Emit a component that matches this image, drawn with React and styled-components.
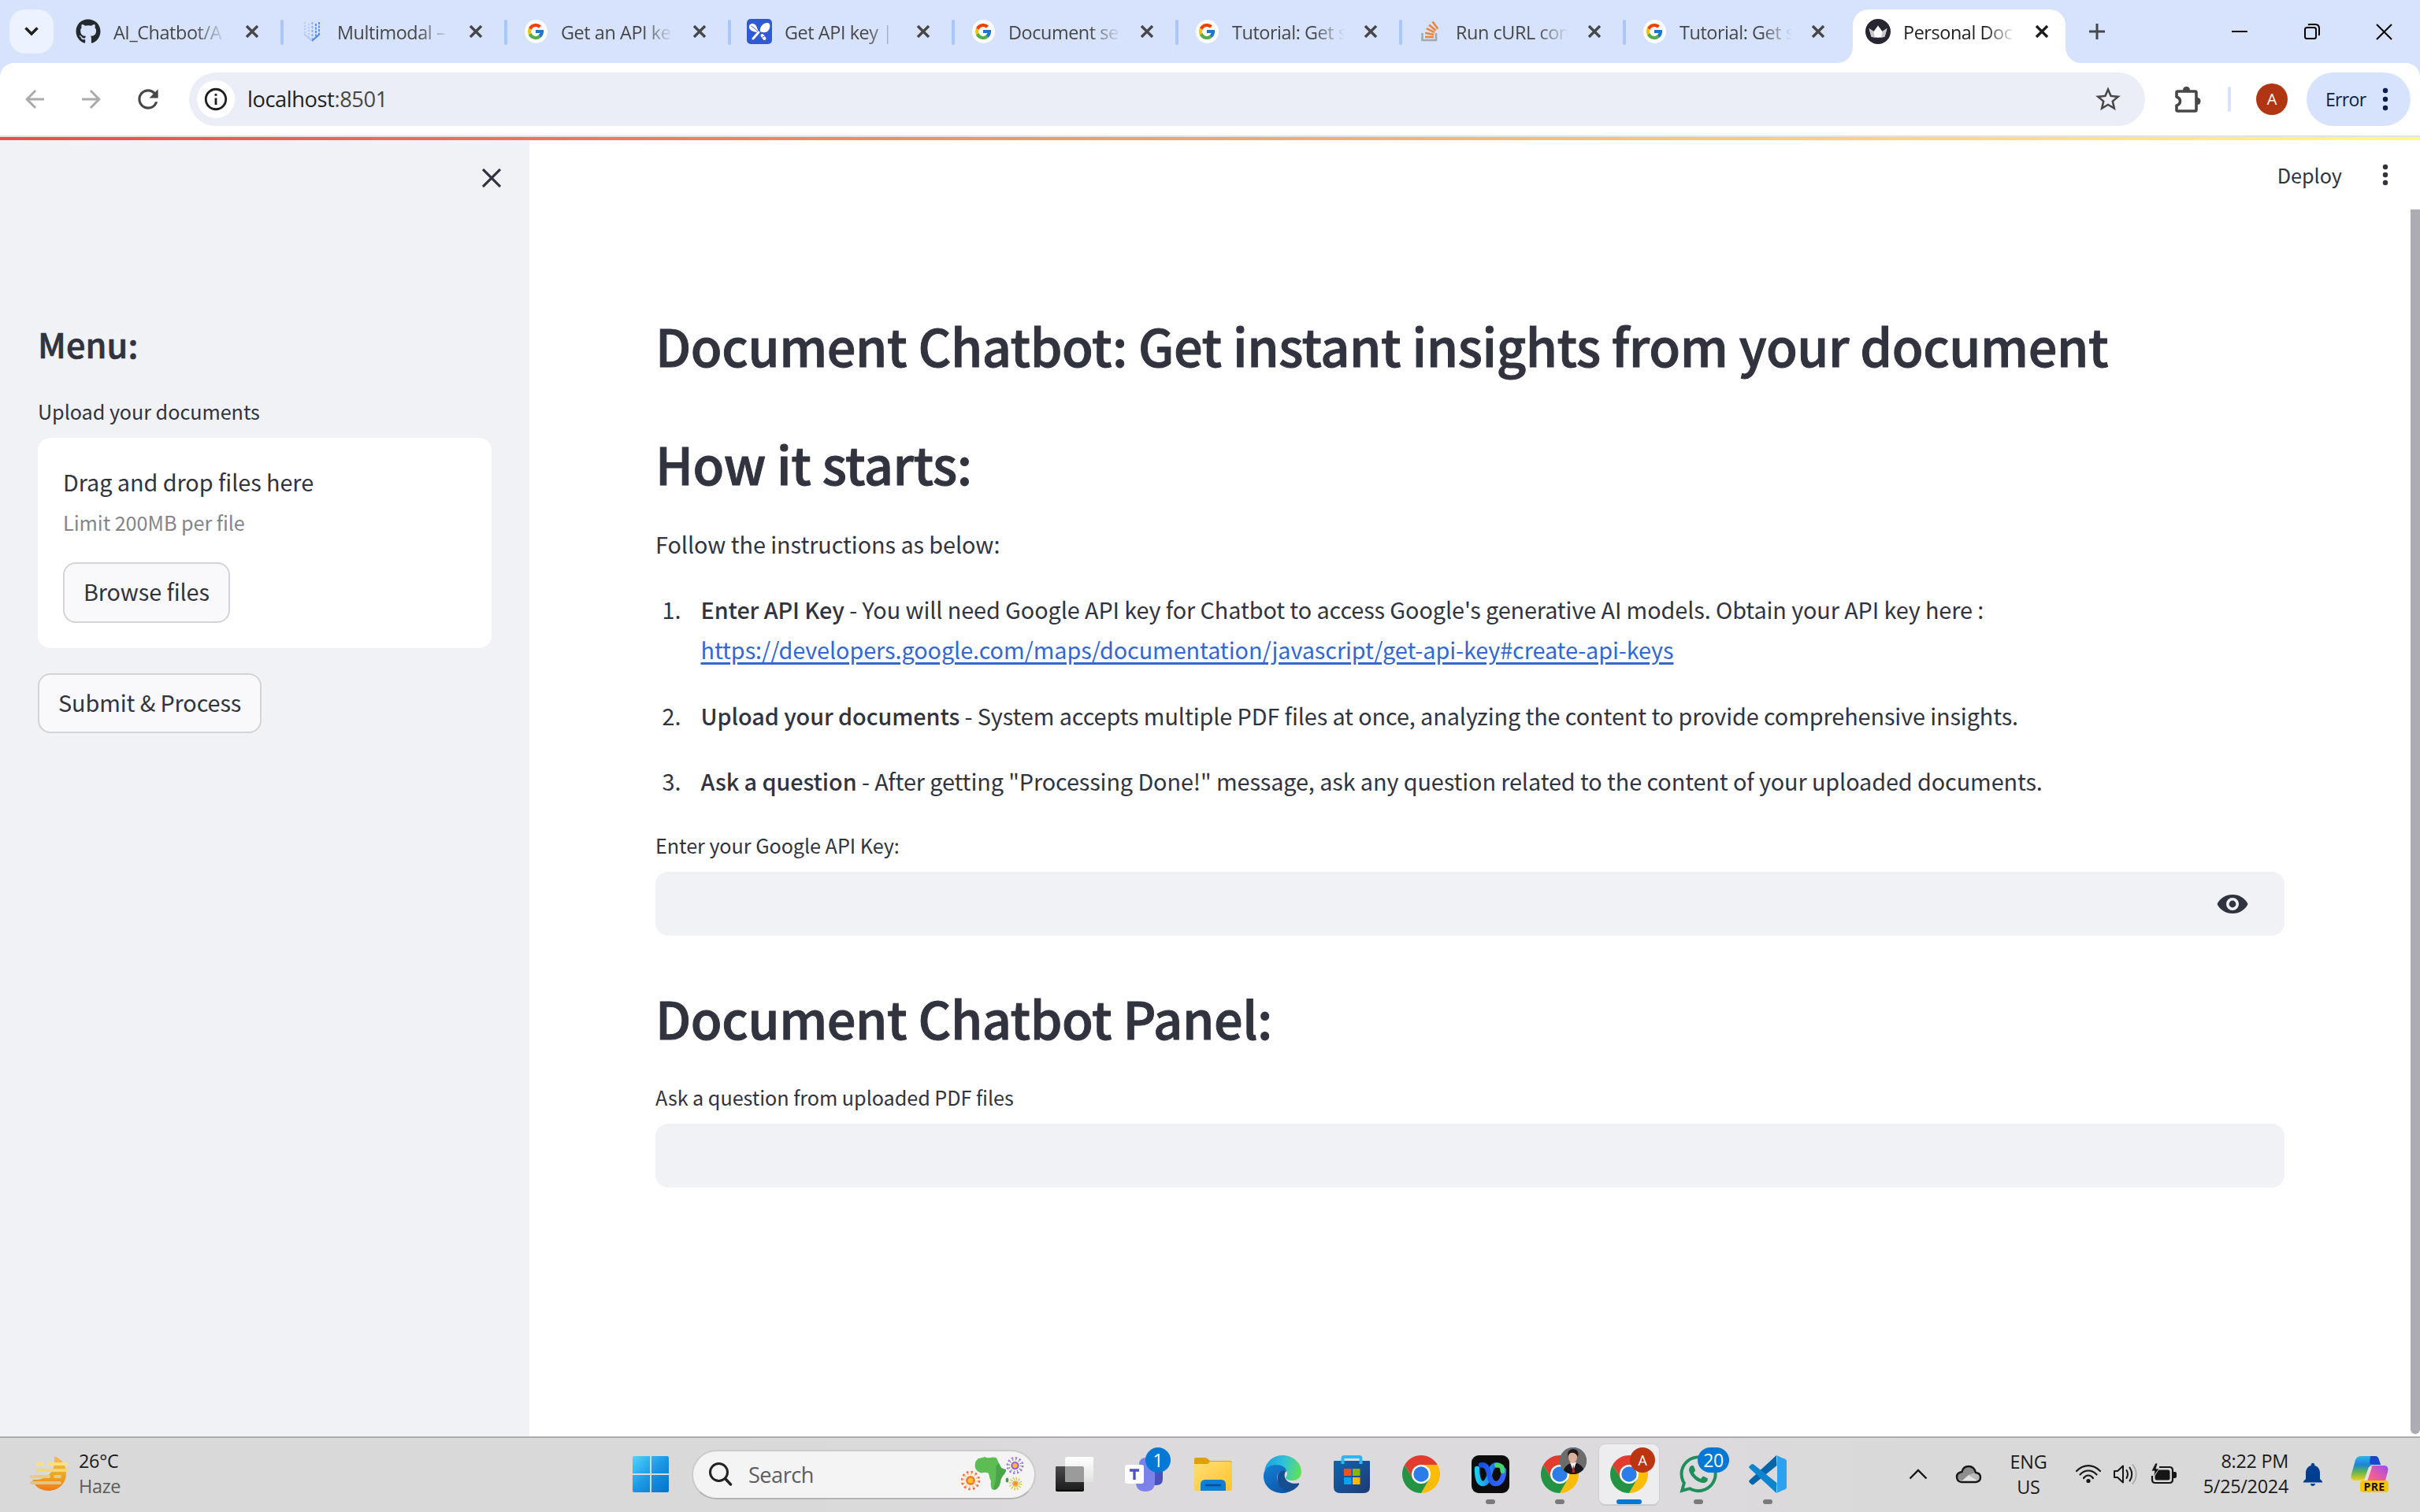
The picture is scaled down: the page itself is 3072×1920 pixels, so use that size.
import React from "react";
import styled, { createGlobalStyle, css } from "styled-components";
import { FaGithub, FaWhatsapp } from "react-icons/fa";
import { FcGoogle } from "react-icons/fc";
import {
  MdArrowBack,
  MdArrowForward,
  MdRefresh,
  MdStarBorder,
  MdInfoOutline,
  MdNotifications,
} from "react-icons/md";

const SOURCE = `"Noto Sans CJK SC", "Noto Sans", sans-serif`;
const SYSTEM = `"Open Sans", "Noto Sans", sans-serif`;
const INK = "#31333f";

const Global = createGlobalStyle`
  *, *::before, *::after { box-sizing: border-box; }
  html, body { margin: 0; padding: 0; }
  body { background: #fff; font-family: ${SOURCE}; color: ${INK}; overflow: hidden; }
  svg { display: block; flex: none; }
  h1, h2, p, ol { margin: 0; padding: 0; }
`;

const Screen = styled.div`
  width: 3072px;
  height: 1920px;
  display: flex;
  flex-direction: column;
  background: #fff;
`;

/* ---------- browser: tab strip ---------- */

const TabStrip = styled.div`
  height: 80px;
  flex: none;
  display: flex;
  padding: 12px 0 0 12px;
  background: #d7e3fd;
  font-family: ${SYSTEM};
`;

const TabSearch = styled.button`
  width: 56px;
  height: 56px;
  margin-right: 8px;
  padding: 0;
  border: 0;
  border-radius: 20px;
  background: #ecf2ff;
  display: flex;
  align-items: center;
  justify-content: center;
`;

const Tab = styled.div`
  position: relative;
  width: ${(p) => (p.$active ? 270 : 284)}px;
  height: 68px;
  flex: none;
  margin-left: ${(p) => (p.$active ? 4 : 0)}px;
  padding: 0 ${(p) => (p.$active ? 22 : 28)}px 12px ${(p) => (p.$active ? 16 : 20)}px;
  display: flex;
  align-items: center;
  color: ${(p) => (p.$active ? "#1f1f1f" : "#474747")};
  border-radius: 20px 20px 0 0;
  ${(p) =>
    p.$active &&
    css`
      background: #fff;
      &::before,
      &::after {
        content: "";
        position: absolute;
        bottom: 0;
        width: 20px;
        height: 20px;
      }
      &::before {
        left: -20px;
        background: radial-gradient(circle at 0 0, transparent 19.5px, #fff 20.5px);
      }
      &::after {
        right: -20px;
        background: radial-gradient(circle at 100% 0, transparent 19.5px, #fff 20.5px);
      }
    `}
  ${(p) =>
    p.$divider &&
    css`
      &::after {
        content: "";
        position: absolute;
        right: 0;
        top: 13px;
        width: 4px;
        height: 32px;
        border-radius: 2px;
        background: #a8c7fa;
      }
    `}
`;

const Favicon = styled.span`
  width: 32px;
  height: 32px;
  flex: none;
  display: flex;
  align-items: center;
  justify-content: center;
`;

const GoogleDisc = styled.span`
  width: 29px;
  height: 30px;
  border-radius: 50%;
  background: #fff;
  display: flex;
  align-items: center;
  justify-content: center;
`;

const TabTitle = styled.span`
  width: 152px;
  margin-left: 16px;
  padding-top: 2px;
  white-space: nowrap;
  font-size: 23.4px;
  line-height: 34px;
  letter-spacing: -0.018em;
  mask-image: linear-gradient(90deg, #000 68%, transparent 94%);
`;

const TabClose = styled.span`
  margin-left: 16px;
`;

const NewTab = styled.span`
  width: 80px;
  height: 56px;
  display: flex;
  align-items: center;
  justify-content: center;
`;

const WindowButtons = styled.div`
  margin-left: auto;
  display: flex;
  height: 56px;
`;

const WindowButton = styled.span`
  width: 91.6px;
  display: flex;
  align-items: center;
  justify-content: center;
`;

/* ---------- browser: toolbar ---------- */

const ToolbarBack = styled.div`
  flex: none;
  background: #d7e3fd;
`;

const Toolbar = styled.div`
  height: 94px;
  display: flex;
  align-items: center;
  padding: 0 12px 0 8px;
  background: #fff;
  border-radius: 18px 18px 0 0;
  border-bottom: 2px solid #e0e3df;
  font-family: ${SYSTEM};
`;

const NavButton = styled.span`
  width: 72px;
  display: flex;
  justify-content: center;
  color: ${(p) => (p.$off ? "#ababab" : "#474747")};
`;

const AddressBar = styled.div`
  flex: 1;
  height: 68px;
  margin-left: 16px;
  padding: 0 28px 0 10px;
  border-radius: 34px;
  background: #ebeef7;
  display: flex;
  align-items: center;
  color: #474747;
`;

const SiteInfo = styled.span`
  width: 48px;
  height: 48px;
  border-radius: 50%;
  background: #fff;
  color: #1f1f1f;
  display: flex;
  align-items: center;
  justify-content: center;
`;

const Url = styled.span`
  flex: 1;
  margin-left: 16px;
  font-size: 27.3px;
  line-height: 40px;
  letter-spacing: -0.016em;
`;

const Host = styled.span`
  color: #1f1f1f;
`;

const ToolSlot = styled.span`
  width: 105px;
  padding-left: 2px;
  display: flex;
  justify-content: center;
`;

const ToolDivider = styled.span`
  width: 4px;
  height: 32px;
  border-radius: 2px;
  background: #d7e3fd;
`;

const Avatar = styled.span`
  width: 40px;
  height: 40px;
  margin: 0 24px 0 32px;
  border-radius: 50%;
  background: #b03512;
  color: #fff;
  font-size: 20px;
  line-height: 40px;
  text-align: center;
`;

const ErrorChip = styled.span`
  width: 132px;
  height: 68px;
  padding: 0 28px 0 24px;
  border-radius: 34px;
  background: #d7e3fd;
  color: #0b1f4c;
  font-size: 23px;
  letter-spacing: -0.03em;
  display: flex;
  align-items: center;
  justify-content: space-between;
`;

const Decoration = styled.div`
  height: 4px;
  flex: none;
  background: linear-gradient(90deg, #ec4b4f, #fffd80);
`;

/* ---------- page ---------- */

const Page = styled.div`
  flex: 1;
  min-height: 0;
  display: flex;
`;

const Sidebar = styled.aside`
  width: 672px;
  flex: none;
  padding: 0 48px;
  background: #f0f2f6;
`;

const SidebarTop = styled.div`
  height: 229px;
  display: flex;
  justify-content: flex-end;
  padding: 36px 0 0;
  margin-right: -12px;
`;

const MenuTitle = styled.h2`
  font-size: 43.2px;
  font-weight: 500;
  line-height: 58px;
  letter-spacing: 0.1px;
  -webkit-text-stroke: 0.7px ${INK};
`;

const FieldLabel = styled.p`
  margin-top: ${(p) => p.$gap}px;
  margin-bottom: 11px;
  font-size: 25.2px;
  line-height: 45px;
  letter-spacing: -0.05px;
`;

const DropZone = styled.div`
  height: 267px;
  padding: 30px 32px 32px;
  border-radius: 16px;
  background: #fff;
`;

const DropTitle = styled.p`
  font-size: 28.8px;
  line-height: 51px;
  letter-spacing: -0.05px;
`;

const DropHint = styled.p`
  margin: 4px 0 28px;
  font-size: 25.2px;
  line-height: 45px;
  letter-spacing: -0.05px;
  color: #84858c;
`;

const Button = styled.button`
  height: 76.5px;
  padding: 0 24px 3px;
  border: 2px solid #d3d4d8;
  border-radius: 16px;
  background: #f9f9fb;
  color: ${INK};
  font-family: inherit;
  font-size: 28.8px;
  line-height: 51px;
  letter-spacing: -0.1px;
  display: block;
`;

const SubmitRow = styled.div`
  margin-top: 31.5px;
`;

const Main = styled.main`
  flex: 1;
  display: flex;
  flex-direction: column;
`;

const AppHeader = styled.header`
  height: 88px;
  flex: none;
  display: flex;
  align-items: center;
  justify-content: flex-end;
  gap: 51px;
  padding: 0 40px 0 0;
`;

const Deploy = styled.span`
  font-size: 25.2px;
  line-height: 45px;
`;

const Scroller = styled.div`
  flex: 1;
  min-height: 0;
  display: flex;
`;

const Content = styled.div`
  flex: 1;
  padding: 129px 160px 0 160px;
`;

const ScrollThumb = styled.div`
  width: 12px;
  height: 1555px;
  border-radius: 0 0 6px 6px;
  background: #adacb2;
`;

const Title = styled.h1`
  margin-top: ${(p) => p.$gap || 0}px;
  font-size: 64.8px;
  font-weight: 500;
  line-height: 86px;
  letter-spacing: -0.42px;
  white-space: nowrap;
  -webkit-text-stroke: 1px ${INK};
`;

const Intro = styled.p`
  margin-top: 34px;
  font-size: 28.8px;
  line-height: 51.2px;
  letter-spacing: -0.06px;
`;

const Steps = styled.ol`
  margin-top: 32px;
  list-style: none;
  display: flex;
  flex-direction: column;
  gap: 32px;
`;

const Step = styled.li`
  display: grid;
  grid-template-columns: 49px 1fr;
  padding-left: 8.5px;
  font-size: 28.8px;
  line-height: 51.2px;
  letter-spacing: -0.09px;
  white-space: nowrap;
`;

const Strong = styled.strong`
  font-weight: 500;
`;

const Link = styled.a`
  display: block;
  width: fit-content;
  color: #3367d1;
  letter-spacing: -0.07px;
  text-decoration: underline;
  text-decoration-thickness: 3px;
  text-underline-offset: 4px;
`;

const TextField = styled.div`
  height: 81px;
  padding-right: 46px;
  border-radius: 16px;
  background: #f0f2f6;
  display: flex;
  align-items: center;
  justify-content: flex-end;
`;

/* ---------- taskbar ---------- */

const Taskbar = styled.footer`
  height: 96px;
  flex: none;
  display: flex;
  align-items: center;
  padding-bottom: 2px;
  border-top: 2px solid #adadad;
  background: linear-gradient(90deg, #d9d9d9 20%, #dcdadc 45%, #dcdadc 70%, #d9d9d9 85%);
  font-family: ${SYSTEM};
  font-size: 23.4px;
  line-height: 32px;
  letter-spacing: -0.012em;
  color: #1a1a1a;
`;

const Weather = styled.div`
  width: 782px;
  flex: none;
  display: flex;
  align-items: center;
  gap: 14px;
  padding: 0 0 2px 38px;
`;

const Lines = styled.div`
  padding-bottom: ${(p) => p.$lift || 0}px;
  text-align: ${(p) => p.$align || "left"};
`;

const Muted = styled.div`
  color: #5c5c5c;
`;

const TaskCell = styled.div`
  position: relative;
  width: 88px;
  height: 92px;
  flex: none;
  display: flex;
  align-items: center;
  justify-content: center;
  &::after {
    content: "";
    display: ${(p) => (p.$running || p.$active ? "block" : "none")};
    position: absolute;
    bottom: 8px;
    left: 50%;
    transform: translateX(-50%);
    width: ${(p) => (p.$active ? 32 : 12)}px;
    height: 6px;
    border-radius: 3px;
    background: ${(p) => (p.$active ? "#0078d4" : "#7c7b7c")};
  }
`;

const ActivePlate = styled.span`
  width: 76px;
  height: 76px;
  border-radius: 8px;
  background: #edecee;
  box-shadow: 0 0 0 1px #d0cfd0, 0 2px 0 #c6c5c6;
  display: flex;
  align-items: center;
  justify-content: center;
`;

const Badge = styled.span`
  position: absolute;
  top: 12px;
  left: ${(p) => p.$left}px;
  width: ${(p) => p.$w || 32}px;
  height: ${(p) => p.$h || 32}px;
  border-radius: 17px;
  background: ${(p) => p.$bg || "#0078d4"};
  color: #fff;
  font-size: ${(p) => p.$size || 23}px;
  line-height: 32px;
  text-align: center;
  overflow: hidden;
`;

const SearchBox = styled.div`
  width: 437px;
  height: 63px;
  margin: 0 5px 0 8px;
  flex: none;
  padding: 0 13px 0 20px;
  border: 2px solid #cbcbcb;
  border-bottom-color: #b3b3b3;
  border-radius: 32px;
  background: #f4f4f4;
  display: flex;
  align-items: center;
  color: #5d5d5d;
  font-size: 27.2px;
`;

const SearchText = styled.span`
  flex: 1;
  margin-left: 20px;
  padding-top: 1px;
  letter-spacing: -0.02em;
`;

const Tray = styled.div`
  margin-left: auto;
  margin-right: 37px;
  display: flex;
  align-items: center;
`;

const TrayCell = styled.div`
  width: ${(p) => p.$w}px;
  margin-left: ${(p) => p.$gap || 0}px;
  height: 92px;
  display: flex;
  align-items: center;
  justify-content: ${(p) => p.$justify || "center"};
`;

const CopilotWrap = styled.span`
  position: relative;
  display: block;
`;

const PreTag = styled.span`
  position: absolute;
  left: 12px;
  bottom: 0;
  width: 36px;
  height: 15px;
  border-radius: 4px;
  background: #fdc400;
  color: #111;
  font-size: 14px;
  font-weight: 700;
  line-height: 15px;
  letter-spacing: 0.3px;
  text-align: center;
`;

/* ---------- drawings ---------- */

const Cross = ({ size = 16, width = 3.4, color = "#474747" }) => (
  <svg width={size} height={size} viewBox={`0 0 ${size} ${size}`}>
    <path d={`M1 1 L${size - 1} ${size - 1} M${size - 1} 1 L1 ${size - 1}`} stroke={color} strokeWidth={width} />
  </svg>
);

const Dots = ({ r = 3.2, step = 10, color = INK }) => (
  <svg width="8" height={step * 2 + 8} viewBox={`0 0 8 ${step * 2 + 8}`} fill={color}>
    <circle cx="4" cy="4" r={r} />
    <circle cx="4" cy={4 + step} r={r} />
    <circle cx="4" cy={4 + step * 2} r={r} />
  </svg>
);

const VertexIcon = () => (
  <svg width="24" height="28" viewBox="0 0 24 28" fill="none" stroke="#4f86ee" strokeWidth="1.800">
    <path d="M3 2V19M8 4V22" strokeDasharray="2 2" stroke="#b5cbf8" />
    <path d="M12.500 2V24" strokeDasharray="3 2" stroke="#86acf4" />
    <path d="M17 4V20M21 2V17" strokeDasharray="3 1.500" />
    <path d="M2 17L11 25" stroke="#b5cbf8" strokeWidth="2" />
    <path d="M22 17L12 26" strokeWidth="2" />
  </svg>
);

const ApiKeyIcon = () => (
  <svg width="32" height="32" viewBox="0 0 32 32">
    <rect width="32" height="32" rx="5" fill="#2f5ad3" />
    <path d="M15 17C8 17 2 14 3 9C4 5 10 5 12 9C13 11 14 14 15 17Z" fill="#fff" />
    <path d="M17 16C16 11 20 5 26 5C31 5 30 13 26 16C23 18 19 17 17 16Z" fill="#fff" />
    <path d="M15 17L8 25" stroke="#fff" strokeWidth="3" strokeLinecap="round" />
    <path d="M19.500 21L22.500 25" stroke="#fff" strokeWidth="4" strokeLinecap="round" />
    <path d="M5.500 9C9 11 12 14 14 16M19.500 23.500L22.500 22" stroke="#2f5ad3" strokeWidth="1" fill="none" />
  </svg>
);

const StackIcon = () => (
  <svg width="26" height="28" viewBox="0 0 26 28" fill="none">
    <path d="M2.500 16V25H20V16" stroke="#a5a8ad" strokeWidth="2.600" />
    <g stroke="#e8853a" strokeWidth="2.600">
      <path d="M6 21H17" />
      <path d="M6.200 15.800L17.200 18" />
      <path d="M7.800 10.200L18 15.200" />
      <path d="M11 5.500L19.600 12.700" />
      <path d="M15.500 1.500L22.200 10.500" />
    </g>
  </svg>
);

const CrownIcon = () => (
  <svg width="32" height="32" viewBox="0 0 32 32">
    <circle cx="16" cy="16" r="16" fill="#262730" />
    <path d="M4.500 12L10.500 16L16 8.500L21.500 16L27.500 12L24.500 22.500Q16 25 7.500 22.500Z" fill="#fff" />
    <path d="M4.500 12L10.500 16L12 23.600Q9 23.300 7.500 22.500ZM27.500 12L21.500 16L20 23.600Q23 23.300 24.500 22.500Z" fill="#c9c9cc" />
  </svg>
);

const PuzzleIcon = () => (
  <svg width="38" height="36" viewBox="0 0 38 36" fill="none">
    <path
      d="M5 9.500Q5 8 6.500 8H28.500Q30 8 30 9.500V31.500Q30 33 28.500 33H6.500Q5 33 5 31.500V26Q9.500 24.500 9.500 20.500Q9.500 16.500 5 15Z"
      stroke="#474747"
      strokeWidth="3.600"
      strokeLinejoin="round"
    />
    <path d="M13 7Q13 2 17.500 2Q22 2 22 7ZM31 16Q35.500 16 35.500 20.500Q35.500 25 31 25Z" fill="#474747" />
  </svg>
);

const EyeIcon = () => (
  <svg width="40" height="24" viewBox="0 0 40 24">
    <path d="M0.500 12C4 4.500 11.500 0 20 0S36 4.500 39.500 12C36 19.500 28.500 24 20 24S4 19.500 0.500 12Z" fill={INK} />
    <circle cx="20" cy="12" r="6.200" fill={INK} stroke="#f0f2f6" strokeWidth="3.600" />
  </svg>
);

const HazeIcon = () => (
  <svg width="48" height="44" viewBox="0 0 48 44">
    <defs>
      <linearGradient id="haze" x1="0" y1="0" x2="0" y2="1">
        <stop offset="0" stopColor="#f4bd55" />
        <stop offset=".5" stopColor="#eeaa22" />
        <stop offset="1" stopColor="#f27a17" />
      </linearGradient>
    </defs>
    <path d="M31 0C41 4 46 12 46 22C46 35 36 44 23.500 44C14 44 6 39 3 30C16 31 30 25 31 8Z" fill="url(#haze)" />
    <g strokeWidth="4" strokeLinecap="round">
      <path d="M10 10H16M24 10H46" stroke="#ffe07a" />
      <path d="M10 18H46" stroke="#f6d678" />
      <path d="M2 26H24M32 26H38" stroke="#e8cb85" />
      <path d="M2 34H38" stroke="#dfc48b" />
    </g>
  </svg>
);

const WindowsIcon = () => (
  <svg width="46" height="46" viewBox="0 0 46 46">
    <defs>
      <linearGradient id="win" x1="0" y1="0" x2="1" y2="1">
        <stop offset="0" stopColor="#4fd5ff" />
        <stop offset=".5" stopColor="#1b97e3" />
        <stop offset="1" stopColor="#0072cf" />
      </linearGradient>
    </defs>
    <path d="M2 0H22V22H0V2Q0 0 2 0ZM24 0H44Q46 0 46 2V22H24ZM0 24H22V46H2Q0 46 0 44ZM24 24H46V44Q46 46 44 46H24Z" fill="url(#win)" />
  </svg>
);

const SearchIcon = () => (
  <svg width="30" height="30" viewBox="0 0 30 30" fill="none" stroke="#222" strokeLinecap="round">
    <circle cx="12.500" cy="12.500" r="11" strokeWidth="3" />
    <path d="M20.500 20.500L27.500 28" strokeWidth="3.400" />
  </svg>
);

const Flower = ({ x, y, r, outer, mid, core, dots }) => (
  <g transform={`translate(${x} ${y})`} fill="none">
    <circle r={r} stroke={outer} strokeWidth={r * 0.24} strokeDasharray={`${r * 0.24} ${r * 0.285}`} />
    <circle r={r * 0.76} stroke={dots} strokeWidth={r * 0.16} strokeDasharray={`${r * 0.15} ${r * 0.25}`} />
    <circle r={r * 0.42} fill={core} stroke={mid} strokeWidth={r * 0.24} />
  </g>
);

const AfricaArt = () => (
  <svg width="80" height="44" viewBox="0 0 80 44">
    <path
      d="M22 2Q28 1 30 0Q34 2 37 1Q42 0 45 1.500L48 8L51 14Q55 16 57 16Q57 20 53 24Q50 28 50 32Q49 37 46 40Q43 43 39 41Q37 36 38 31Q36 27 35 21Q31 19 26 20.500Q20 19 18 14Q17 8 19 5Z"
      fill="#5dbc52"
    />
    <path d="M48 8L51 14Q55 16 57 16Q57 20 53 24Q50 28 50 32Q49 37 46 40Q43 43 41 41Q46 25 44 12Z" fill="#48a548" />
    <ellipse cx="58.500" cy="29.500" rx="1.800" ry="3" fill="#3f9f48" />
    <Flower x={12} y={30} r={11} outer="#fb6b43" mid="#fb7b35" core="#ffc629" dots="#ffc04d" />
    <Flower x={68.500} y={11} r={9.800} outer="#b06adf" mid="#a561d8" core="#ffb93b" dots="#55ad5a" />
    <Flower x={69} y={34} r={7.500} outer="#fbc62f" mid="#f7b733" core="#f08b4b" dots="#6bbf64" />
  </svg>
);

const TaskViewIcon = () => (
  <svg width="48" height="44" viewBox="0 0 48 44">
    <defs>
      <linearGradient id="tv" x1="0" y1="0" x2="0" y2="1">
        <stop offset="0" stopColor="#4a4a4a" />
        <stop offset="1" stopColor="#1c1c1c" />
      </linearGradient>
      <linearGradient id="tvFront" x1="0" y1="0" x2="0" y2="1">
        <stop offset="0" stopColor="#ffffff" />
        <stop offset="1" stopColor="#e2e2e2" />
      </linearGradient>
    </defs>
    <rect x="0" y="12" width="36" height="32" rx="2" fill="#050505" />
    <rect x="0" y="12" width="36" height="30" rx="2" fill="url(#tv)" />
    <rect x="12" y="0" width="36" height="32" rx="2" fill="url(#tvFront)" />
    <path d="M12 12H34Q36 12 36 14V32H14Q12 32 12 30Z" fill="#9b9b9b" />
  </svg>
);

const TeamsIcon = () => (
  <svg width="48" height="44" viewBox="0 0 48 44">
    <circle cx="40" cy="10" r="6" fill="#4f54c4" />
    <path d="M30 16H48V28Q48 36 40 36Q32 36 30 30Z" fill="#4b50bf" />
    <circle cx="26" cy="9" r="8" fill="#7b83eb" />
    <path d="M14 15H38V32Q38 44 26 44Q14 44 14 32Z" fill="#7b83eb" />
    <rect x="0" y="10" width="24" height="24" rx="3" fill="#fff" />
    <path d="M6 17H18M12 17V29" stroke="#4f54c4" strokeWidth="3.400" />
  </svg>
);

const FolderIcon = () => (
  <svg width="48" height="42" viewBox="0 0 48 42">
    <defs>
      <linearGradient id="fold" x1="0" y1="0" x2="1" y2="1">
        <stop offset="0" stopColor="#ffde73" />
        <stop offset="1" stopColor="#ffc42e" />
      </linearGradient>
    </defs>
    <path d="M0 2Q0 0 2 0H14Q16 0 20 4H46Q48 4 48 6V14H0Z" fill="#e0a100" />
    <path d="M0 8H16Q18 8 20 5H46Q48 5 48 7V40Q48 42 46 42H2Q0 42 0 40Z" fill="url(#fold)" />
    <path d="M8 42V34Q8 28 14 28H34Q40 28 40 34V42Z" fill="#0d7fd4" />
    <path d="M15 35H33" stroke="#0a4f96" strokeWidth="2.400" strokeLinecap="round" />
  </svg>
);

const EdgeIcon = () => (
  <svg width="48" height="48" viewBox="0 0 48 48">
    <defs>
      <linearGradient id="edgeTop" x1="0" y1=".3" x2="1" y2=".5">
        <stop offset="0" stopColor="#1c9de0" />
        <stop offset=".5" stopColor="#2fc2d8" />
        <stop offset="1" stopColor="#62e05a" />
      </linearGradient>
      <linearGradient id="edgeLow" x1="0" y1="0" x2=".6" y2="1">
        <stop offset="0" stopColor="#1382d8" />
        <stop offset="1" stopColor="#0d57a8" />
      </linearGradient>
    </defs>
    <path d="M1 20C3 8 12 0 24 0C38 0 48 10 48 21C48 28 43 32 37 32C31 32 27.500 30 28 28C30 26 31 23 29 20C26 13 8 10 1 20Z" fill="url(#edgeTop)" />
    <path d="M0 25C1 16 8 12 16 12C23 12 28 15 29.500 20C27 18 18 19 17 28C17 39 30 48 38 43C34 46.500 29 48 24 48C10 48 -1 38 0 25Z" fill="url(#edgeLow)" />
    <path d="M17.500 28C18 22 23 17 29 20C24 23 26 38 44 35.500C45 35 45.500 36 45 37C42 42 36 46 30 46C22 44 17 36 17.500 28Z" fill="#154f93" />
  </svg>
);

const StoreIcon = () => (
  <svg width="46" height="48" viewBox="0 0 46 48">
    <defs>
      <linearGradient id="store" x1="0" y1="0" x2="1" y2="1">
        <stop offset="0" stopColor="#0c66b4" />
        <stop offset="1" stopColor="#213a70" />
      </linearGradient>
    </defs>
    <path d="M0 8Q0 7 1 7H45Q46 7 46 8V40Q46 48 38 48H8Q0 48 0 40Z" fill="url(#store)" />
    <path d="M11.500 11V4Q11.500 2 13.500 2H32.500Q34.500 2 34.500 4V11" fill="none" stroke="#2cb7f3" strokeWidth="4" />
    <rect x="13" y="17" width="9.500" height="9" fill="#f25022" />
    <rect x="24" y="17" width="9.500" height="9" fill="#7fba00" />
    <rect x="13" y="28" width="9.500" height="9" fill="#00a4ef" />
    <rect x="24" y="28" width="9.500" height="9" fill="#ffb900" />
  </svg>
);

const ChromeIcon = () => (
  <svg width="48" height="48" viewBox="0 0 48 48">
    <path d="M44.780 12A24 24 0 0 1 24 48L34.390 30L24 12Z" fill="#fbbc0a" />
    <path d="M24 48A24 24 0 0 1 3.220 12L13.610 30L34.390 30Z" fill="#249444" />
    <path d="M3.220 12A24 24 0 0 1 44.780 12L24 12L13.610 30Z" fill="#e33b2e" />
    <circle cx="24" cy="24" r="12" fill="#fff" />
    <circle cx="24" cy="24" r="9.700" fill="#2b7de9" />
  </svg>
);

const WebexIcon = () => (
  <svg width="48" height="48" viewBox="0 0 48 48" fill="none">
    <defs>
      <linearGradient id="wxA" x1="0" y1="0" x2="1" y2="0">
        <stop offset="0" stopColor="#18cdf5" />
        <stop offset="1" stopColor="#2060f0" />
      </linearGradient>
      <linearGradient id="wxB" x1="0" y1="0" x2="1" y2="0">
        <stop offset="0" stopColor="#1550e8" />
        <stop offset=".6" stopColor="#2c62f4" />
        <stop offset="1" stopColor="#3c62ff" />
      </linearGradient>
    </defs>
    <rect width="48" height="48" rx="9" fill="#0c0c0c" />
    <path d="M7 17C7 27 9 36 14.500 36C21 36 22 26 24.500 19C26.500 13.500 30 12 33 12.500" stroke="url(#wxA)" strokeWidth="6.500" strokeLinecap="round" />
    <path d="M12 12.500C17 11.500 20 15 21.500 21C23.500 30 25 36 31 36C38 36 41 27 41 19" stroke="url(#wxB)" strokeWidth="6.500" strokeLinecap="round" />
    <path d="M32 12.500C37 12 39.500 15 39.500 20" stroke="#46d46e" strokeWidth="6" strokeLinecap="round" />
  </svg>
);

const PortraitArt = () => (
  <svg width="34" height="34" viewBox="0 0 34 34">
    <rect width="34" height="34" fill="#6d6c6a" />
    <path d="M3 34Q6 22 14 20L22 20Q30 23 33 34Z" fill="#17171b" />
    <path d="M13 19L17 30L21 19Z" fill="#f1eeee" />
    <path d="M17 22L15.500 32H19.500Z" fill="#b3242c" />
    <ellipse cx="16.500" cy="12.500" rx="5.500" ry="7.500" fill="#dcb19b" />
    <path d="M10 13Q9 2 17 2Q25 2 23 12Q20 6 14 7Q11 8 10 13Z" fill="#1d1716" />
  </svg>
);

const VsCodeIcon = () => (
  <svg width="48" height="48" viewBox="0 0 48 48">
    <path d="M35 0L35.500 13L6 37Q4.500 38 3 36.500L0.800 34.500Q-0.500 33 1 31.500Z" fill="#0065a9" />
    <path d="M35 48L35.500 35L6 11.500Q4.500 10.500 3 11.700L0.800 13.700Q-0.500 15 1 16.500Z" fill="#0b85cf" />
    <path d="M35 0L46.500 5Q48 6 48 8V40Q48 42 46.500 43L35 48Q36 47 36 45V3Q36 1 35 0Z" fill="#2ba1ef" />
  </svg>
);

const CloudIcon = () => (
  <svg width="34" height="24" viewBox="0 0 34 24">
    <path d="M8 22H26Q32 21.500 32 16Q32 10.500 26 10Q24 2 17 2Q10 2 8.500 9Q2 10 2 15.500Q2 21 8 22Z" fill="#e4e4e4" />
    <path d="M8.500 9Q10 2 17 2Q24 2 26 10L17 13L9 20Q2 19 2 15.500Q3 10 8.500 9Z" fill="#8e8e8e" />
    <path d="M17 13L26 10Q32 10.500 32 16Q32 20 29 21Z" fill="#b9b9b9" />
    <path d="M8 22H26Q32 21.500 32 16Q32 10.500 26 10Q24 2 17 2Q10 2 8.500 9Q2 10 2 15.500Q2 21 8 22Z" fill="none" stroke="#161616" strokeWidth="2.400" />
  </svg>
);

const WifiIcon = () => (
  <svg width="34" height="24" viewBox="0 0 34 24" fill="none" stroke="#161616" strokeWidth="2.200" strokeLinecap="round">
    <path d="M2 8Q9 1.200 17 1.200T32 8M6.500 12.500Q11 7.500 17 7.500T27.500 12.500M11 17Q13.500 13.500 17 13.500T23 17" />
    <circle cx="17" cy="20.500" r="2.600" fill="#161616" stroke="none" />
  </svg>
);

const VolumeIcon = () => (
  <svg width="34" height="28" viewBox="0 0 34 28" fill="none" strokeWidth="2" strokeLinecap="round">
    <path d="M2 10H6L13 3.500V24.500L6 18H2Z" stroke="#161616" strokeLinejoin="round" />
    <path d="M17.500 9Q20.500 14 17.500 19M21.500 5.500Q27 14 21.500 22.500" stroke="#161616" />
    <path d="M25.500 2Q34 14 25.500 26" stroke="#adadad" />
  </svg>
);

const BatteryIcon = () => (
  <svg width="34" height="28" viewBox="0 0 34 28">
    <path d="M11 5H24Q28 5 28 9V21Q28 25 24 25H6Q2 25 2 21V16" fill="none" stroke="#161616" strokeWidth="2.200" />
    <path d="M10 8.500H22Q24.500 8.500 24.500 11V19Q24.500 21.500 22 21.500H8Q5.500 21.500 5.500 19V16Z" fill="#161616" />
    <path d="M29 11H31Q33 11 33 13V17Q33 19 31 19H29Z" fill="#161616" />
    <path d="M6 0L1 10H5L3.500 17L11 7H7L9 0Z" fill="#161616" stroke="#d9d9d9" strokeWidth=".8" />
  </svg>
);

const CopilotIcon = () => (
  <svg width="48" height="46" viewBox="0 0 48 46">
    <defs>
      <linearGradient id="cpA" x1="0" y1="0" x2="0" y2="1">
        <stop offset="0" stopColor="#2cb5f2" />
        <stop offset=".35" stopColor="#1c84d6" />
        <stop offset=".65" stopColor="#5fb54d" />
        <stop offset="1" stopColor="#f4cf1b" />
      </linearGradient>
      <linearGradient id="cpB" x1="0" y1="1" x2="1" y2="0">
        <stop offset="0" stopColor="#ff7a54" />
        <stop offset=".5" stopColor="#ec5c9d" />
        <stop offset="1" stopColor="#9a4df0" />
      </linearGradient>
    </defs>
    <path d="M13 0H31Q35 0 36 5L38 11H28Q24 11 22 17L18 28Q17 31 13 31H5Q-1 31 1 23L6 5Q8 0 13 0Z" fill="url(#cpA)" />
    <path d="M25 0H31Q35 0 36 5L38 11H29Q25 11 24 8Z" fill="#1748cc" />
    <path d="M30 12H42Q49 12 47 20L44 31Q42 38 36 38H14Q19 37 20 32L25 16Q26 12 30 12Z" fill="url(#cpB)" />
    <path d="M23 14H27L21 32H17Z" fill="#e9dfe8" />
  </svg>
);

/* ---------- data ---------- */

const GoogleIcon = () => (
  <GoogleDisc>
    <FcGoogle size={24} />
  </GoogleDisc>
);

const TABS = [
  { title: "AI_Chatbot/A", icon: <FaGithub size={32} color="#24292f" /> },
  { title: "Multimodal –", icon: <VertexIcon /> },
  { title: "Get an API ke", icon: <GoogleIcon /> },
  { title: "Get API key |", icon: <ApiKeyIcon /> },
  { title: "Document se", icon: <GoogleIcon /> },
  { title: "Tutorial: Get s", icon: <GoogleIcon /> },
  { title: "Run cURL con", icon: <StackIcon /> },
  { title: "Tutorial: Get s", icon: <GoogleIcon /> },
  { title: "Personal Doc", icon: <CrownIcon /> },
];

const ACTIVE = 8;

export default function App() {
  return (
    <Screen>
      <Global />
      <TabStrip>
        <TabSearch>
          <svg width="18" height="12" viewBox="0 0 18 12" fill="none">
            <path d="M1.500 1.500L9 9L16.500 1.500" stroke="#1f1f1f" strokeWidth="3.400" />
          </svg>
        </TabSearch>
        {TABS.map((tab, i) => (
          <Tab key={i} $active={i === ACTIVE} $divider={i < ACTIVE - 1}>
            <Favicon>{tab.icon}</Favicon>
            <TabTitle>{tab.title}</TabTitle>
            <TabClose>
              <Cross color={i === ACTIVE ? "#1f1f1f" : "#474747"} />
            </TabClose>
          </Tab>
        ))}
        <NewTab>
          <svg width="20" height="20" viewBox="0 0 20 20">
            <path d="M10 0V20M0 10H20" stroke="#474747" strokeWidth="3" />
          </svg>
        </NewTab>
        <WindowButtons>
          <WindowButton>
            <svg width="20" height="20" viewBox="0 0 20 20">
              <path d="M0 10H20" stroke="#000" strokeWidth="2" />
            </svg>
          </WindowButton>
          <WindowButton>
            <svg width="20" height="20" viewBox="0 0 20 20" fill="none" stroke="#000" strokeWidth="2">
              <rect x="1" y="5" width="14" height="14" rx="2.500" />
              <path d="M5 1.500Q6 1 7 1H14Q19 1 19 6V13Q19 14 18.500 15" />
            </svg>
          </WindowButton>
          <WindowButton>
            <Cross size={21} width={2} color="#000" />
          </WindowButton>
        </WindowButtons>
      </TabStrip>

      <ToolbarBack>
        <Toolbar>
          <NavButton $off>
            <MdArrowBack size={36} />
          </NavButton>
          <NavButton $off>
            <MdArrowForward size={36} />
          </NavButton>
          <NavButton>
            <MdRefresh size={38} />
          </NavButton>
          <AddressBar>
            <SiteInfo>
              <MdInfoOutline size={34} />
            </SiteInfo>
            <Url>
              <Host>localhost</Host>:8501
            </Url>
            <MdStarBorder size={38} />
          </AddressBar>
          <ToolSlot>
            <PuzzleIcon />
          </ToolSlot>
          <ToolDivider />
          <Avatar>A</Avatar>
          <ErrorChip>
            Error
            <Dots step={11} color="#0b1f4c" />
          </ErrorChip>
        </Toolbar>
      </ToolbarBack>
      <Decoration />

      <Page>
        <Sidebar>
          <SidebarTop>
            <Cross size={24} width={3.2} color={INK} />
          </SidebarTop>
          <MenuTitle>Menu:</MenuTitle>
          <FieldLabel $gap={35}>Upload your documents</FieldLabel>
          <DropZone>
            <DropTitle>Drag and drop files here</DropTitle>
            <DropHint>Limit 200MB per file</DropHint>
            <Button>Browse files</Button>
          </DropZone>
          <SubmitRow>
            <Button>Submit &amp; Process</Button>
          </SubmitRow>
        </Sidebar>

        <Main>
          <AppHeader>
            <Deploy>Deploy</Deploy>
            <Dots />
          </AppHeader>
          <Scroller>
            <Content>
              <Title>Document Chatbot: Get instant insights from your document</Title>
              <Title $gap={64}>How it starts:</Title>
              <Intro>Follow the instructions as below:</Intro>
              <Steps>
                <Step>
                  <span>1.</span>
                  <span>
                    <Strong>Enter API Key</Strong> - You will need Google API key for Chatbot to access Google's
                    generative AI models. Obtain your API key here :
                    <Link>https://developers.google.com/maps/documentation/javascript/get-api-key#create-api-keys</Link>
                  </span>
                </Step>
                <Step>
                  <span>2.</span>
                  <span>
                    <Strong>Upload your documents</Strong> - System accepts multiple PDF files at once, analyzing the
                    content to provide comprehensive insights.
                  </span>
                </Step>
                <Step>
                  <span>3.</span>
                  <span>
                    <Strong>Ask a question</Strong> - After getting "Processing Done!" message, ask any question related
                    to the content of your uploaded documents.
                  </span>
                </Step>
              </Steps>
              <FieldLabel $gap={34}>Enter your Google API Key:</FieldLabel>
              <TextField>
                <EyeIcon />
              </TextField>
              <Title $gap={61}>Document Chatbot Panel:</Title>
              <FieldLabel $gap={35.5}>Ask a question from uploaded PDF files</FieldLabel>
              <TextField />
            </Content>
            <ScrollThumb />
          </Scroller>
        </Main>
      </Page>

      <Taskbar>
        <Weather>
          <HazeIcon />
          <Lines>
            26°C
            <Muted>Haze</Muted>
          </Lines>
        </Weather>
        <TaskCell>
          <WindowsIcon />
        </TaskCell>
        <SearchBox>
          <SearchIcon />
          <SearchText>Search</SearchText>
          <AfricaArt />
        </SearchBox>
        <TaskCell>
          <TaskViewIcon />
        </TaskCell>
        <TaskCell>
          <TeamsIcon />
          <Badge $left={46}>1</Badge>
        </TaskCell>
        <TaskCell>
          <FolderIcon />
        </TaskCell>
        <TaskCell>
          <EdgeIcon />
        </TaskCell>
        <TaskCell>
          <StoreIcon />
        </TaskCell>
        <TaskCell>
          <ChromeIcon />
        </TaskCell>
        <TaskCell $running>
          <WebexIcon />
        </TaskCell>
        <TaskCell $running>
          <ChromeIcon />
          <Badge $left={44} $w={34} $h={34}>
            <PortraitArt />
          </Badge>
        </TaskCell>
        <TaskCell $active>
          <ActivePlate>
            <ChromeIcon />
          </ActivePlate>
          <Badge $left={45} $bg="#bd3510" $size={18}>
            A
          </Badge>
        </TaskCell>
        <TaskCell $running>
          <FaWhatsapp size={54} color="#1e8e5a" />
          <Badge $left={43} $w={40}>
            20
          </Badge>
        </TaskCell>
        <TaskCell $running>
          <VsCodeIcon />
        </TaskCell>

        <Tray>
          <TrayCell $w={48}>
            <svg width="24" height="14" viewBox="0 0 24 14" fill="none">
              <path d="M1.500 12.500L12 2L22.500 12.500" stroke="#161616" strokeWidth="2.400" />
            </svg>
          </TrayCell>
          <TrayCell $w={80}>
            <CloudIcon />
          </TrayCell>
          <TrayCell $w={72}>
            <Lines $align="center">
              ENG
              <div>US</div>
            </Lines>
          </TrayCell>
          <TrayCell $w={48} $gap={16}>
            <WifiIcon />
          </TrayCell>
          <TrayCell $w={48}>
            <VolumeIcon />
          </TrayCell>
          <TrayCell $w={48}>
            <BatteryIcon />
          </TrayCell>
          <TrayCell $w={134} $justify="flex-end">
            <Lines $align="right" $lift={2}>
              8:22 PM
              <div>5/25/2024</div>
            </Lines>
          </TrayCell>
          <TrayCell $w={42} $gap={10}>
            <MdNotifications size={36} color="#003e92" />
          </TrayCell>
          <TrayCell $w={54} $gap={24}>
            <CopilotWrap>
              <CopilotIcon />
              <PreTag>PRE</PreTag>
            </CopilotWrap>
          </TrayCell>
        </Tray>
      </Taskbar>
    </Screen>
  );
}
